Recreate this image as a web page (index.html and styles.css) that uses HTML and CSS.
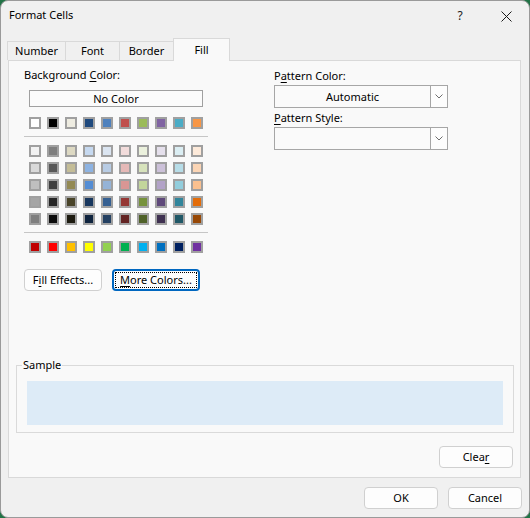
FILE: index.html
```html
<!DOCTYPE html>
<html>
<head>
<meta charset="utf-8">
<link rel="stylesheet" href="styles.css">
</head>
<body>
<div class="dialog">
  <div class="titlebar">
    <div class="title">Format Cells</div>
    <div class="tb-btn help">?</div>
    <div class="tb-btn close">
      <svg width="11" height="11" viewBox="0 0 11 11"><path d="M0.5 0.5 L10.5 10.5 M10.5 0.5 L0.5 10.5" stroke="#1a1a1a" stroke-width="1" fill="none"/></svg>
    </div>
  </div>
  <div class="tabs">
    <div class="tab tab-number">Number</div>
    <div class="tab tab-font">Font</div>
    <div class="tab tab-border">Border</div>
    <div class="tab tab-fill active">Fill</div>
  </div>
  <div class="panel">
    <div class="top">
      <div class="left">
        <div class="label">Background <u>C</u>olor:</div>
        <div class="nocolor">No Color</div>
        <div class="swatches first">
          <span class="sw" style="background:#FFFFFF"></span>
          <span class="sw" style="background:#000000"></span>
          <span class="sw" style="background:#EEECE1"></span>
          <span class="sw" style="background:#1F497D"></span>
          <span class="sw" style="background:#4F81BD"></span>
          <span class="sw" style="background:#C0504D"></span>
          <span class="sw" style="background:#9BBB59"></span>
          <span class="sw" style="background:#8064A2"></span>
          <span class="sw" style="background:#4BACC6"></span>
          <span class="sw" style="background:#F79646"></span>
        </div>
        <div class="sep"></div>
        <div class="theme-grid">
          <span class="sw" style="background:#F2F2F2"></span>
          <span class="sw" style="background:#7F7F7F"></span>
          <span class="sw" style="background:#DDD9C3"></span>
          <span class="sw" style="background:#C6D9F0"></span>
          <span class="sw" style="background:#DBE5F1"></span>
          <span class="sw" style="background:#F2DCDB"></span>
          <span class="sw" style="background:#EBF1DD"></span>
          <span class="sw" style="background:#E5E0EC"></span>
          <span class="sw" style="background:#DBEEF3"></span>
          <span class="sw" style="background:#FDEADA"></span>

          <span class="sw" style="background:#D9D9D9"></span>
          <span class="sw" style="background:#595959"></span>
          <span class="sw" style="background:#C4BD97"></span>
          <span class="sw" style="background:#8DB3E2"></span>
          <span class="sw" style="background:#B8CCE4"></span>
          <span class="sw" style="background:#E5B9B7"></span>
          <span class="sw" style="background:#D7E3BC"></span>
          <span class="sw" style="background:#CCC1D9"></span>
          <span class="sw" style="background:#B7DDE8"></span>
          <span class="sw" style="background:#FBD5B5"></span>

          <span class="sw" style="background:#BFBFBF"></span>
          <span class="sw" style="background:#3F3F3F"></span>
          <span class="sw" style="background:#938953"></span>
          <span class="sw" style="background:#548DD4"></span>
          <span class="sw" style="background:#95B3D7"></span>
          <span class="sw" style="background:#D99694"></span>
          <span class="sw" style="background:#C3D69B"></span>
          <span class="sw" style="background:#B2A2C7"></span>
          <span class="sw" style="background:#92CDDC"></span>
          <span class="sw" style="background:#FAC08F"></span>

          <span class="sw" style="background:#A5A5A5"></span>
          <span class="sw" style="background:#262626"></span>
          <span class="sw" style="background:#494429"></span>
          <span class="sw" style="background:#17365D"></span>
          <span class="sw" style="background:#366092"></span>
          <span class="sw" style="background:#953734"></span>
          <span class="sw" style="background:#76923C"></span>
          <span class="sw" style="background:#5F497A"></span>
          <span class="sw" style="background:#31859B"></span>
          <span class="sw" style="background:#E36C09"></span>

          <span class="sw" style="background:#7F7F7F"></span>
          <span class="sw" style="background:#0C0C0C"></span>
          <span class="sw" style="background:#1D1B10"></span>
          <span class="sw" style="background:#0F243E"></span>
          <span class="sw" style="background:#244061"></span>
          <span class="sw" style="background:#632423"></span>
          <span class="sw" style="background:#4F6128"></span>
          <span class="sw" style="background:#3F3151"></span>
          <span class="sw" style="background:#205867"></span>
          <span class="sw" style="background:#974806"></span>
        </div>
        <div class="sep"></div>
        <div class="swatches standard">
          <span class="sw" style="background:#C00000"></span>
          <span class="sw" style="background:#FF0000"></span>
          <span class="sw" style="background:#FFC000"></span>
          <span class="sw" style="background:#FFFF00"></span>
          <span class="sw" style="background:#92D050"></span>
          <span class="sw" style="background:#00B050"></span>
          <span class="sw" style="background:#00B0F0"></span>
          <span class="sw" style="background:#0070C0"></span>
          <span class="sw" style="background:#002060"></span>
          <span class="sw" style="background:#7030A0"></span>
        </div>
        <div class="btn-row">
          <button class="btn fill-effects">F<u>i</u>ll Effects...</button>
          <button class="btn more-colors"><span class="focus"><u>M</u>ore Colors...</span></button>
        </div>
      </div>
      <div class="right">
        <div class="label label-pc">P<u>a</u>ttern Color:</div>
        <div class="combo">
          <div class="combo-text">Automatic</div>
          <div class="combo-arrow"><svg width="8" height="5" viewBox="0 0 8 5"><path d="M0.5 0.5 L4 4 L7.5 0.5" stroke="#6e6e6e" stroke-width="1" fill="none"/></svg></div>
        </div>
        <div class="label label-ps"><u>P</u>attern Style:</div>
        <div class="combo">
          <div class="combo-text"></div>
          <div class="combo-arrow"><svg width="8" height="5" viewBox="0 0 8 5"><path d="M0.5 0.5 L4 4 L7.5 0.5" stroke="#6e6e6e" stroke-width="1" fill="none"/></svg></div>
        </div>
      </div>
    </div>
    <fieldset class="sample">
      <legend>Sample</legend>
      <div class="sample-area"></div>
    </fieldset>
    <div class="clear-row">
      <button class="btn clear">Clea<u>r</u></button>
    </div>
  </div>
  <div class="footer">
    <button class="btn">OK</button>
    <button class="btn">Cancel</button>
  </div>
</div>
</body>
</html>
```

FILE: styles.css
```css
html, body {
  margin: 0;
  padding: 0;
}

body {
  background: #217346;
  font-family: "Noto Sans", "DejaVu Sans", sans-serif;
  font-size: 11px;
  line-height: 16px;
  color: #000;
}

u {
  text-decoration: underline;
  text-underline-offset: 2px;
}

.dialog {
  width: 530px;
  height: 518px;
  box-sizing: border-box;
  background: #f0f0f0;
  border: 1px solid #9a9a9a;
  border-radius: 8px;
  overflow: hidden;
}

/* title bar */
.titlebar {
  display: flex;
  height: 37px;
}

.title {
  flex: 1;
  padding: 6px 0 0 8px;
  font-size: 11px;
}

.tb-btn {
  width: 46px;
  height: 30px;
  display: flex;
  align-items: center;
  justify-content: center;
}

.help {
  font-size: 12px;
  color: #1a1a1a;
}

/* tabs */
.tabs {
  display: flex;
  align-items: flex-end;
  height: 22px;
  padding-left: 6px;
}

.tab {
  box-sizing: border-box;
  height: 19px;
  border: 1px solid #d9d9d9;
  border-bottom: none;
  background: #f0f0f0;
  text-align: center;
  padding-top: 1px;
  margin-left: -1px;
}

.tab-number { width: 59px; margin-left: 0; }
.tab-font { width: 55px; }
.tab-border { width: 55px; }
.tab-fill { width: 57px; }

.tab.active {
  height: 23px;
  margin-bottom: -1px;
  padding-top: 3px;
  background: #f9f9f9;
  position: relative;
  z-index: 1;
}

/* panel */
.panel {
  box-sizing: border-box;
  width: 513px;
  height: 418px;
  margin-left: 7px;
  border: 1px solid #d9d9d9;
  background: #f9f9f9;
  padding: 0 6px 0 7px;
}

.top {
  display: flex;
  margin-left: 8px;
}

.left {
  width: 184px;
  padding-top: 6px;
}

.right {
  margin-left: 66px;
  width: 174px;
  padding-top: 7px;
}

.label {
  height: 16px;
}

.nocolor {
  box-sizing: border-box;
  width: 174px;
  height: 17px;
  margin: 7px 0 0 5px;
  border: 1px solid #a0a0a0;
  background: #fbfbfb;
  text-align: center;
  line-height: 15px;
}

.swatches {
  display: flex;
  gap: 6px;
  margin-left: 5px;
}

.swatches.first {
  margin-top: 10px;
}

.swatches.standard {
  margin-top: 8px;
}

.theme-grid {
  display: grid;
  grid-template-columns: repeat(10, 12px);
  column-gap: 6px;
  row-gap: 5px;
  margin: 8px 0 0 5px;
}

.sw {
  display: block;
  width: 12px;
  height: 12px;
  box-sizing: border-box;
  border: 2px solid #a0a0a0;
}

.sep {
  height: 1px;
  background: #c6c6c6;
  margin-top: 7px;
}

.btn-row {
  display: flex;
  gap: 10px;
  margin-top: 16px;
}

.btn {
  font-family: inherit;
  font-size: 11px;
  line-height: 16px;
  color: #000;
  height: 22px;
  box-sizing: border-box;
  padding: 0;
  border: 1px solid #d0d0d0;
  border-radius: 4px;
  background: #fdfdfd;
  width: 74px;
}

.fill-effects {
  width: 78px;
}

.more-colors {
  width: 88px;
  border: 2px solid #0067c0;
  padding: 1px;
  display: flex;
}

.more-colors .focus {
  flex: 1;
  border: 1px dotted #000;
  line-height: 14px;
}

/* combos */
.combo {
  display: flex;
  box-sizing: border-box;
  height: 23px;
  border: 1px solid #a6a6a6;
  background: #fafafa;
}

.combo-text {
  flex: 1;
  text-align: center;
  line-height: 21px;
}

.combo-arrow {
  width: 17px;
  box-sizing: border-box;
  border-left: 1px solid #a6a6a6;
  background: #fdfdfd;
  display: flex;
  align-items: center;
  justify-content: center;
}

.label-pc {
  margin-bottom: 1px;
}

.label-ps {
  margin-top: 2px;
  margin-bottom: 1px;
}

/* sample */
.sample {
  margin: 66px 0 0 0;
  padding: 8px 10px 7px 10px;
  border: 1px solid #dadada;
  min-width: 0;
}

.sample legend {
  padding: 0 1px;
  margin-left: -5px;
  line-height: 16px;
}

.sample-area {
  height: 44px;
  background: #ddebf7;
}

.clear-row {
  display: flex;
  justify-content: flex-end;
  margin-top: 13px;
  padding-right: 1px;
}

/* footer */
.footer {
  display: flex;
  justify-content: flex-end;
  gap: 10px;
  margin-top: 9px;
  padding-right: 7px;
}
```
